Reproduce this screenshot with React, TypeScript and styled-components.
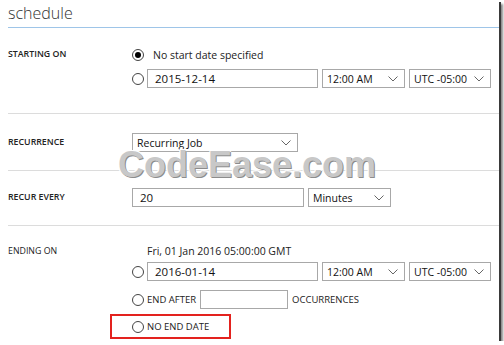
import React from "react";
import styled, { createGlobalStyle } from "styled-components";

const Global = createGlobalStyle`
  html, body { margin: 0; padding: 0; background: #ffffff; }
  body { font-family: "Open Sans", "Noto Sans", sans-serif; color: #222; }
`;

const Frame = styled.div`
  position: relative;
  width: 499px;
  height: 341px;
  background: #fff;
  box-shadow: 2px 2px 0 #3a3a3a, 4px 4px 2px #8a8a8a;
  overflow: hidden;
`;

const Header = styled.div`
  margin-left: 8px;
  height: 27px;
  border-bottom: 1px solid #9ec5e8;
  display: flex;
  align-items: flex-start;
`;

const Title = styled.h1`
  margin: 0;
  padding-top: 2px;
  font-family: "Open Sans", sans-serif;
  font-weight: 300;
  font-size: 16px;
  line-height: 22px;
  color: #333;
`;

const Section = styled.div<{ $pt: number; $pb: number; $last?: boolean }>`
  margin-left: 8px;
  display: grid;
  grid-template-columns: 124px 1fr;
  padding-top: ${(p) => p.$pt}px;
  padding-bottom: ${(p) => p.$pb}px;
  border-bottom: ${(p) => (p.$last ? "none" : "1px solid #dcdcdc")};
`;

const Label = styled.div<{ $h: number; $bold?: boolean }>`
  font-size: 8.8px;
  font-weight: ${(p) => (p.$bold === false ? 400 : 600)};
  line-height: ${(p) => p.$h}px;
  height: ${(p) => p.$h}px;
  color: #222;
`;

const Column = styled.div<{ $gap: number }>`
  display: flex;
  flex-direction: column;
  gap: ${(p) => p.$gap}px;
`;

const Row = styled.div<{ $h?: number; $mt?: number; $indent?: number }>`
  display: flex;
  align-items: center;
  height: ${(p) => p.$h ?? 19}px;
  margin-top: ${(p) => p.$mt ?? 0}px;
  padding-left: ${(p) => p.$indent ?? 0}px;
  gap: 4px;
`;

const Radio = styled.span<{ $checked?: boolean }>`
  position: relative;
  box-sizing: border-box;
  width: 12px;
  height: 12px;
  border-radius: 50%;
  border: 1px solid #444;
  background: #fff;
  flex: none;
  margin-right: ${(p) => (p.$checked ? 5 : -1)}px;
  &::after {
    content: "";
    display: ${(p) => (p.$checked ? "block" : "none")};
    position: absolute;
    left: 2px;
    top: 2px;
    width: 6px;
    height: 6px;
    border-radius: 50%;
    background: #000;
  }
`;

const Text = styled.span<{ $size?: number }>`
  font-size: ${(p) => p.$size ?? 10.5}px;
  color: #222;
  white-space: nowrap;
`;

const Box = styled.div<{ $w: number }>`
  box-sizing: border-box;
  width: ${(p) => p.$w}px;
  height: 19px;
  border: 1px solid #a8a8a8;
  background: #fff;
  display: flex;
  align-items: center;
  padding: 0 5px 0 7px;
  font-size: 11.5px;
  color: #111;
  flex: none;
`;

const SelectBox = styled(Box)`
  justify-content: space-between;
  padding: 0 6px 0 4px;
  font-size: 10.5px;
`;

const Chevron = () => (
  <svg width="10" height="6" viewBox="0 0 10 6" fill="none">
    <path d="M0.5 0.5 L5 5 L9.5 0.5" stroke="#666" strokeWidth="1" />
  </svg>
);

const Select = ({ w, value }: { w: number; value: string }) => (
  <SelectBox $w={w}>
    <span>{value}</span>
    <Chevron />
  </SelectBox>
);

const Watermark = styled.div`
  position: absolute;
  left: 118px;
  top: 145px;
  font-family: "Liberation Sans", Arial, sans-serif;
  font-weight: 700;
  font-size: 36px;
  line-height: 40px;
  color: #c8c8c8;
  text-shadow: 1px 1px 0 #8c8c8c, -1px -1px 0 #fff, 1px -1px 0 #fff, -1px 1px 0 #fff;
  pointer-events: none;
`;

const Highlight = styled.div`
  margin-left: -22px;
  margin-top: 2px;
  box-sizing: border-box;
  width: 121px;
  height: 25px;
  border: 2px solid #e3221e;
  display: flex;
  align-items: center;
  padding-left: 20px;
  gap: 4px;
`;

export default function App() {
  return (
    <>
      <Global />
      <Frame>
        <Header>
          <Title>schedule</Title>
        </Header>

        <Section $pt={17} $pb={25}>
          <Label $h={19}>STARTING ON</Label>
          <Column $gap={5}>
            <Row>
              <Radio $checked />
              <Text>No start date specified</Text>
            </Row>
            <Row>
              <Radio />
              <Box $w={171}>2015-12-14</Box>
              <Select w={83} value="12:00 AM" />
              <Select w={82} value="UTC -05:00" />
            </Row>
          </Column>
        </Section>

        <Section $pt={19} $pb={18}>
          <Label $h={19}>RECURRENCE</Label>
          <Row>
            <Select w={166} value="Recurring Job" />
          </Row>
        </Section>

        <Section $pt={17} $pb={18}>
          <Label $h={19}>RECUR EVERY</Label>
          <Row>
            <Box $w={172}>20</Box>
            <Select w={83} value="Minutes" />
          </Row>
        </Section>

        <Section $pt={17} $pb={0} $last>
          <Label $h={16} $bold={false}>ENDING ON</Label>
          <Column $gap={3}>
            <Row $h={16} $indent={15}>
              <Text>Fri, 01 Jan 2016 05:00:00 GMT</Text>
            </Row>
            <Row>
              <Radio />
              <Box $w={171}>2016-01-14</Box>
              <Select w={83} value="12:00 AM" />
              <Select w={82} value="UTC -05:00" />
            </Row>
            <Row $mt={6}>
              <Radio />
              <Text $size={9.5}>END AFTER</Text>
              <Box $w={88} />
              <Text $size={9.5}>OCCURRENCES</Text>
            </Row>
            <Highlight>
              <Radio />
              <Text $size={9.5}>NO END DATE</Text>
            </Highlight>
          </Column>
        </Section>

        <Watermark>CodeEase.com</Watermark>
      </Frame>
    </>
  );
}
